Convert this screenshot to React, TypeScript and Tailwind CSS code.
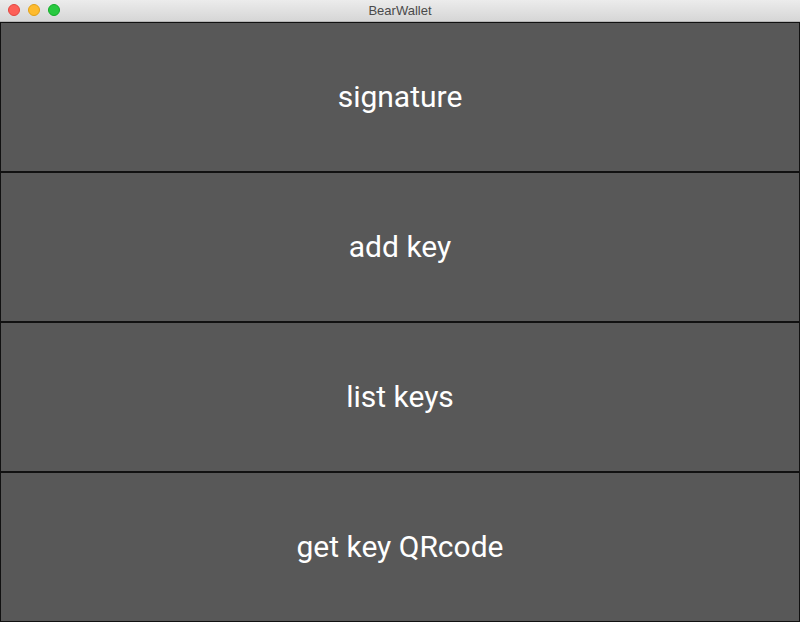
const items = ['signature', 'add key', 'list keys', 'get key QRcode'];

export default function App() {
  return (
    <div className="w-[800px] h-[622px] flex flex-col bg-[#585858] overflow-hidden">
      <div className="relative h-[22px] shrink-0 flex items-center justify-center bg-gradient-to-b from-[#ececec] to-[#d6d6d6] border-b border-[#b4b4b4]">
        <div className="absolute left-[8px] top-[4px] flex gap-[8px]">
          <span className="w-[12px] h-[12px] rounded-full bg-[#fd5f57] border border-[#e2463f]" />
          <span className="w-[12px] h-[12px] rounded-full bg-[#febb2e] border border-[#e1a116]" />
          <span className="w-[12px] h-[12px] rounded-full bg-[#28c940] border border-[#12ac28]" />
        </div>
        <span className="text-[13px] text-[#4a4a4a] font-['Liberation_Sans',sans-serif]">BearWallet</span>
      </div>
      <div className="flex-1 flex flex-col">
        {items.map((label) => (
          <button
            key={label}
            className="flex-1 flex items-center justify-center pb-[2px] border border-[#111111] bg-[#585858] text-white text-[30px] font-['Roboto',sans-serif]"
          >
            {label}
          </button>
        ))}
      </div>
    </div>
  );
}
